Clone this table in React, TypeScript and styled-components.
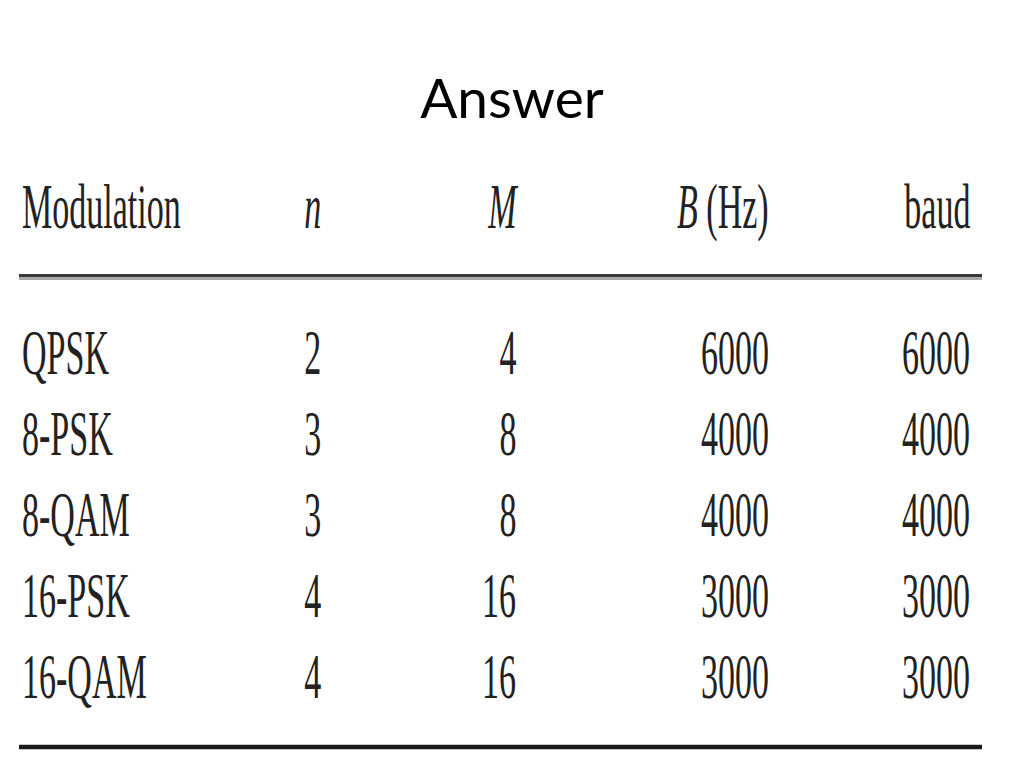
import styled, { createGlobalStyle } from "styled-components";

const GlobalStyle = createGlobalStyle`
  html, body {
    margin: 0;
    padding: 0;
    background: #fff;
  }
  * {
    box-sizing: border-box;
  }
`;

const Slide = styled.div`
  width: 1024px;
  height: 768px;
  background: #fff;
  display: flex;
  flex-direction: column;
  align-items: center;
  overflow: hidden;
`;

const Title = styled.h1`
  margin: 0;
  padding-top: 70px;
  font-family: Lato, "Noto Sans", sans-serif;
  font-weight: 400;
  font-size: 55px;
  line-height: 55px;
  color: #000;
`;

const Table = styled.div`
  align-self: flex-start;
  width: 963px;
  margin: 51px 0 0 19px;
  display: flex;
  flex-direction: column;
  font-family: "Liberation Serif", "Times New Roman", serif;
  font-size: 63px;
  color: #222;
`;

const Row = styled.div<{ $head?: boolean }>`
  display: grid;
  grid-template-columns: 248px 86px 160px 253px 201px;
  padding: 0 12px 0 3px;
  height: ${(p) => (p.$head ? "98px" : "81px")};
  line-height: ${(p) => (p.$head ? "63px" : "81px")};
`;

const Body = styled.div`
  display: flex;
  flex-direction: column;
  padding: 33px 0 26px;
`;

const Rule = styled.div<{ $bottom?: boolean }>`
  height: 6px;
  background: ${(p) =>
    p.$bottom
      ? "linear-gradient(#c8c8c8 0, #c8c8c8 1px, #1a1a1a 1px, #1a1a1a 5px, #c8c8c8 5px)"
      : "linear-gradient(#3a3a3a 0, #3a3a3a 3px, #a8a8a8 3px, #a8a8a8 6px)"};
`;

type Align = "left" | "center" | "right";

const Cell = styled.div<{ $align: Align }>`
  text-align: ${(p) => p.$align};
  white-space: nowrap;
`;

const Squeeze = styled.span<{ $align: Align }>`
  display: inline-block;
  transform: scaleX(0.54);
  transform-origin: ${(p) => p.$align} center;
`;

const Var = styled.i`
  font-style: italic;
`;

const aligns: Align[] = ["left", "center", "right", "right", "right"];

const rows: string[][] = [
  ["QPSK", "2", "4", "6000", "6000"],
  ["8-PSK", "3", "8", "4000", "4000"],
  ["8-QAM", "3", "8", "4000", "4000"],
  ["16-PSK", "4", "16", "3000", "3000"],
  ["16-QAM", "4", "16", "3000", "3000"],
];

function T({ align, children }: { align: Align; children: React.ReactNode }) {
  return (
    <Cell $align={align}>
      <Squeeze $align={align}>{children}</Squeeze>
    </Cell>
  );
}

export default function App() {
  return (
    <>
      <GlobalStyle />
      <Slide>
        <Title>Answer</Title>
        <Table>
          <Row $head>
            <T align="left">Modulation</T>
            <T align="center">
              <Var>n</Var>
            </T>
            <T align="right">
              <Var>M</Var>
            </T>
            <T align="right">
              <Var>B</Var> (Hz)
            </T>
            <T align="right">baud</T>
          </Row>
          <Rule />
          <Body>
            {rows.map((r) => (
              <Row key={r[0]}>
                {r.map((v, i) => (
                  <T key={i} align={aligns[i]}>
                    {v}
                  </T>
                ))}
              </Row>
            ))}
          </Body>
          <Rule $bottom />
        </Table>
      </Slide>
    </>
  );
}
